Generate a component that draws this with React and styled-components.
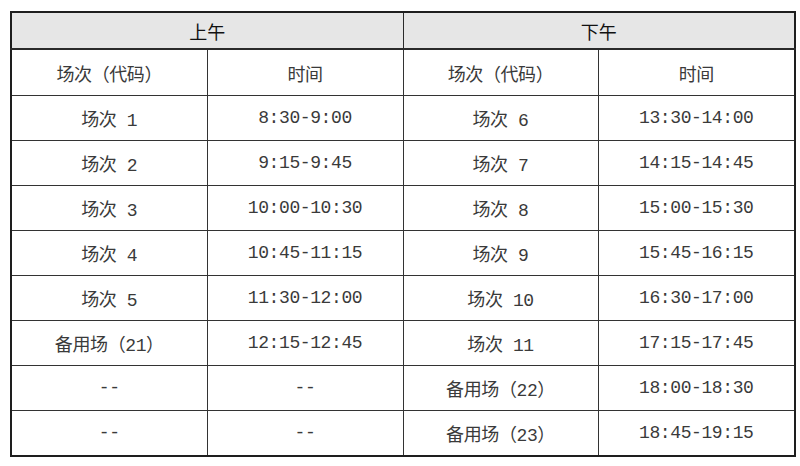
import React from "react";
import styled, { createGlobalStyle } from "styled-components";

const Global = createGlobalStyle`
  html, body { margin: 0; padding: 0; background: #fff; }
`;

const Page = styled.div`
  padding: 11px 0 0 10px;
`;

const Table = styled.table`
  border-collapse: collapse;
  width: 784px;
  table-layout: fixed;
  border: 2.5px solid #1e1e1e;
  font-family: "Liberation Mono", "Noto Sans CJK SC", monospace;
  font-size: 18px;
  color: #3a3a3a;
`;

const HeadCell = styled.th`
  background: #e6e6e6;
  height: 35px;
  padding: 0;
  font-weight: normal;
  color: #111;
  font-size: 18px;
  border: 1.5px solid #2a2a2a;
  border-bottom-width: 2.5px;
  text-align: center;
`;

const Cell = styled.td`
  height: ${(p) => p.$h || 44}px;
  padding: 0;
  text-align: center;
  border: 1.5px solid #333;
  letter-spacing: -0.4px;
`;

const rows = [
  ["场次 1", "8:30-9:00", "场次 6", "13:30-14:00"],
  ["场次 2", "9:15-9:45", "场次 7", "14:15-14:45"],
  ["场次 3", "10:00-10:30", "场次 8", "15:00-15:30"],
  ["场次 4", "10:45-11:15", "场次 9", "15:45-16:15"],
  ["场次 5", "11:30-12:00", "场次 10", "16:30-17:00"],
  ["备用场（21）", "12:15-12:45", "场次 11", "17:15-17:45"],
  ["--", "--", "备用场（22）", "18:00-18:30"],
  ["--", "--", "备用场（23）", "18:45-19:15"],
];

export default function App() {
  return (
    <Page>
      <Global />
      <Table>
        <colgroup>
          <col style={{ width: "196px" }} />
          <col style={{ width: "196px" }} />
          <col style={{ width: "195px" }} />
          <col style={{ width: "197px" }} />
        </colgroup>
        <thead>
          <tr>
            <HeadCell colSpan={2}>上午</HeadCell>
            <HeadCell colSpan={2}>下午</HeadCell>
          </tr>
        </thead>
        <tbody>
          <tr>
            <Cell $h={45}>场次（代码）</Cell>
            <Cell $h={45}>时间</Cell>
            <Cell $h={45}>场次（代码）</Cell>
            <Cell $h={45}>时间</Cell>
          </tr>
          {rows.map((r, i) => (
            <tr key={i}>
              {r.map((c, j) => (
                <Cell key={j}>{c}</Cell>
              ))}
            </tr>
          ))}
        </tbody>
      </Table>
    </Page>
  );
}
